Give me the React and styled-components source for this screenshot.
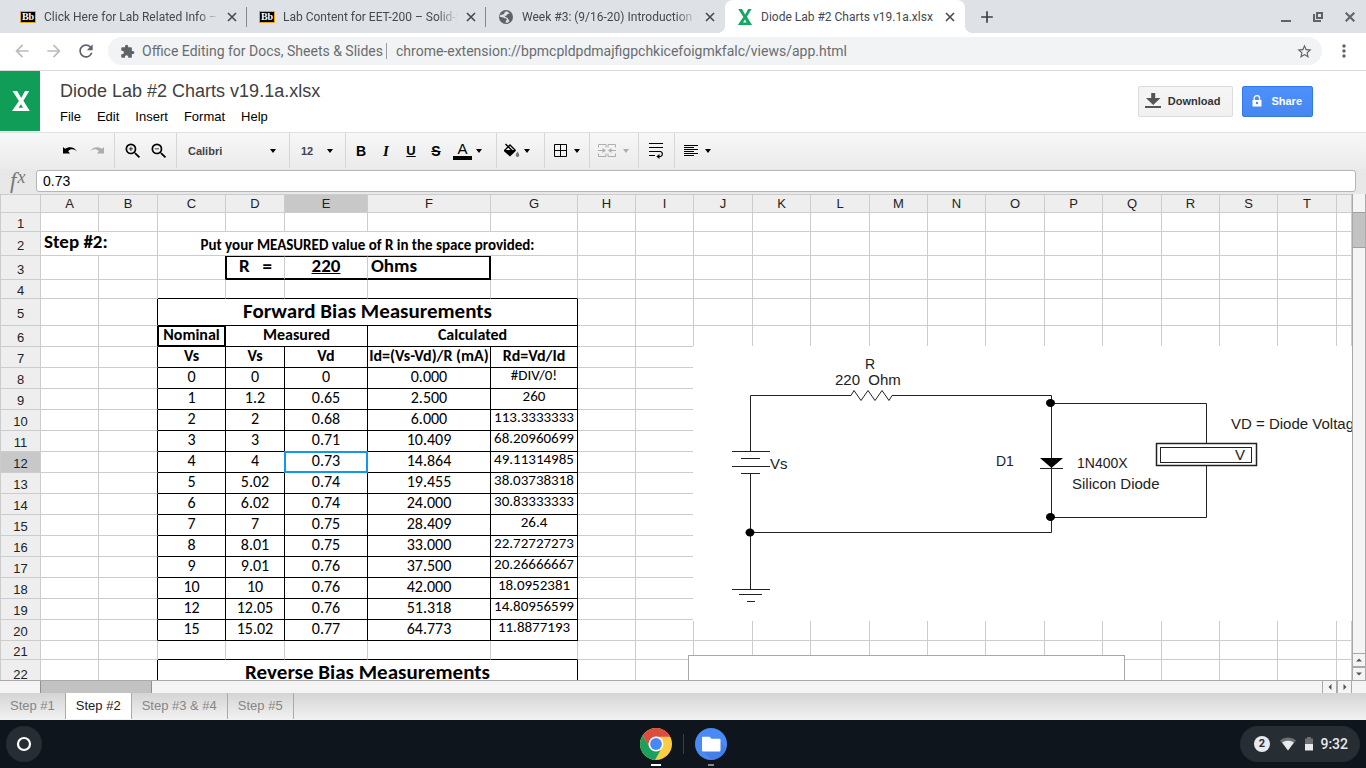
import React from "react";
import styled, { createGlobalStyle, css } from "styled-components";
import {
  MdArrowBack, MdArrowForward, MdRefresh, MdExtension, MdStarBorder, MdMoreVert,
  MdZoomIn, MdZoomOut, MdAdd,
} from "react-icons/md";

const SANS = `"Liberation Sans", Arial, sans-serif`;
const ROBOTO = `Roboto, "Liberation Sans", sans-serif`;
const SHEET = `Carlito, Lato, sans-serif`;

const GlobalStyle = createGlobalStyle`
  *, *::before, *::after { box-sizing: border-box; }
  body { margin: 0; background: #fff; font-family: ${SANS}; }
  button, input, select { font: inherit; color: inherit; }
  button { cursor: pointer; }
  svg { display: block; flex: none; }
`;

const Screen = styled.div`
  display: flex;
  flex-direction: column;
  height: 100vh;
  overflow: hidden;
`;

/* ---------- browser frame ---------- */

const TabStrip = styled.div`
  display: flex;
  align-items: stretch;
  flex: none;
  height: 33px;
  padding-left: 8px;
  background: #dee1e6;
  color: #45494d;
  font: 12px/16px ${ROBOTO};
`;

const Tab = styled.div`
  position: relative;
  display: flex;
  align-items: center;
  gap: 8px;
  flex: 0 1 240px;
  width: 240px;
  min-width: 0;
  max-width: 239px;
  padding: 0 10px 0 12px;
  ${(p) => p.$active ? css`
    max-width: 240px;
    background: #fff;
    border-radius: 8px 8px 0 0;
    &::before, &::after {
      content: "";
      position: absolute;
      bottom: 0;
      width: 8px;
      height: 8px;
    }
    &::before { left: -8px; background: radial-gradient(circle at 0 0, transparent 8px, #fff 8px); }
    &::after { right: -8px; background: radial-gradient(circle at 100% 0, transparent 8px, #fff 8px); }
  ` : css`
    background: ${p.$line ? "linear-gradient(#85888c, #85888c) right center / 1px 20px no-repeat" : "none"};
  `}
`;

const TabTitle = styled.span`
  flex: 1;
  min-width: 0;
  overflow: hidden;
  white-space: nowrap;
  ${(p) => p.$fade && "mask-image: linear-gradient(90deg, #000 88%, transparent);"}
`;

const GlyphButton = styled.button`
  display: flex;
  align-items: center;
  justify-content: center;
  flex: none;
  width: ${(p) => p.$w || 10}px;
  padding: 0;
  border: 0;
  background: none;
  color: ${(p) => p.$color || "#3c4043"};
`;

const WindowControls = styled.div`
  display: flex;
  align-items: center;
  gap: 22px;
  margin-left: auto;
  padding-right: 11px;
`;

const NavBar = styled.div`
  display: flex;
  align-items: center;
  flex: none;
  height: 38px;
  padding: 0 12px 1px;
  border-bottom: 1px solid #d9dadc;
  gap: 12px;
  font: 14px/18px ${ROBOTO};
`;

const Omnibox = styled.div`
  display: flex;
  align-items: center;
  flex: 1;
  min-width: 0;
  height: 28px;
  padding: 0 10px 0 12px;
  border-radius: 14px;
  background: #f1f3f4;
  color: #6a6d70;
  white-space: nowrap;
`;

const SiteName = styled.span`
  margin-left: 7px;
  padding-right: 3px;
  border-right: 1px solid #9a9da0;
  line-height: 16px;
`;

const Address = styled.input`
  flex: 1;
  min-width: 0;
  padding: 0 0 0 9px;
  border: 0;
  background: none;
`;

/* ---------- document header ---------- */

const DocHeader = styled.header`
  display: flex;
  flex: none;
  height: 62px;
  padding-right: 53px;
  border-bottom: 1px solid #e0e0e0;
`;

const DocLogo = styled.div`
  display: flex;
  align-items: center;
  justify-content: center;
  width: 40px;
  height: 60px;
  padding-left: 2px;
  background: #0f9d58;
`;

const DocInfo = styled.div`
  padding: 9px 0 0 20px;
  flex: 1;
`;

const DocTitle = styled.h1`
  margin: 0;
  color: #404040;
  font: 18px/22px ${SANS};
`;

const MenuBar = styled.nav`
  display: flex;
  gap: 16px;
  margin-top: 7px;
`;

const MenuButton = styled.button`
  padding: 0;
  border: 0;
  background: none;
  color: #000;
  font-size: 13px;
  line-height: 16px;
`;

const ActionButton = styled.button`
  display: flex;
  align-items: center;
  gap: ${(p) => (p.$primary ? 9 : 6)}px;
  height: 31px;
  margin: 15px 0 0 9px;
  padding: 0 ${(p) => (p.$primary ? 10 : 12)}px 2px ${(p) => (p.$primary ? 9 : 6)}px;
  border: 1px solid ${(p) => (p.$primary ? "#3079ed" : "#dcdcdc")};
  border-radius: 2px;
  background: ${(p) => (p.$primary ? "linear-gradient(#4d90fe, #4787ed)" : "linear-gradient(#f5f5f5, #f1f1f1)")};
  color: ${(p) => (p.$primary ? "#fff" : "#333")};
  font-size: 11px;
  line-height: 14px;
  font-weight: bold;
`;

/* ---------- editor toolbar ---------- */

const EditorBar = styled.div`
  display: flex;
  flex: none;
  height: 36px;
  background: linear-gradient(#f7f7f7, #ebebeb);
`;

const ToolGroup = styled.div`
  display: flex;
  align-items: center;
  gap: ${(p) => p.$gap || 0}px;
  padding: 0 ${(p) => p.$right || 0}px 0 ${(p) => p.$left || 0}px;
  height: 35px;
  border-right: 1px solid ${(p) => (p.$last ? "transparent" : "#d6d6d6")};
`;

const ToolButton = styled.button`
  display: flex;
  align-items: center;
  justify-content: center;
  gap: ${(p) => p.$gap || 0}px;
  min-width: ${(p) => p.$w || 16}px;
  height: 24px;
  padding: 0;
  border: 0;
  background: none;
  color: #000;
  opacity: ${(p) => (p.disabled ? 0.28 : 1)};
`;

const Letter = styled.span`
  font: ${(p) => p.$font || `bold 14px/16px ${SANS}`};
  text-decoration: ${(p) => p.$line || "none"};
`;

const TextColour = styled.span`
  width: 19px;
  border-bottom: 4px solid #000;
  font: 15px/15px ${SANS};
`;

const PickerBox = styled.span`
  display: flex;
  align-items: center;
  width: ${(p) => p.$w}px;
`;

const Picker = styled.select`
  appearance: none;
  flex: 1;
  min-width: 0;
  padding: 0;
  border: 0;
  background: none;
  color: #444;
  font-size: 11px;
  line-height: 14px;
  font-weight: bold;
`;

const FormulaBar = styled.label`
  display: flex;
  align-items: center;
  flex: none;
  height: 25px;
  padding: 0 10px 2px 0;
  background: #e8e8e8;
`;

const FxMark = styled.span`
  width: 36px;
  padding-left: 10px;
  color: #777;
  font: italic 23px/22px "Liberation Serif", serif;
  sup { margin-left: 1px; font-size: 18px; line-height: 8px; vertical-align: 5px; }
`;

const FormulaInput = styled.input`
  flex: 1;
  min-width: 0;
  height: 22px;
  padding: 0 6px;
  border: 1px solid #b5b5b5;
  border-radius: 3px;
  background: #fff;
  color: #000;
  font-size: 14px;
  line-height: 18px;
`;

/* ---------- spreadsheet ---------- */

const SheetArea = styled.div`
  display: flex;
  flex: 1;
  min-height: 0;
`;

const SheetView = styled.div`
  position: relative;
  flex: 1;
  min-width: 0;
  overflow: hidden;
  border-bottom: 1px solid #a9a9a9;
`;

const Sheet = styled.table`
  width: 100%;
  table-layout: fixed;
  border-spacing: 0;
  border-top: 1px solid #ccc;
  color: #000;
`;

const Heading = styled.th`
  padding: ${(p) => (p.$row ? "3px 0 0" : "0")};
  border-right: 1px solid #ccc;
  border-bottom: 1px solid #ccc;
  ${(p) => p.$row && "border-left: 1px solid #ccc;"}
  background: ${(p) => (p.$selected ? "#c8c8c8" : "#eee")};
  color: #222;
  font: 13px/15px ${SANS};
  text-align: center;
`;

const edge = (kind) =>
  kind === "thick" ? "2px solid #000" : kind === "black" ? "1px solid #000" : kind === "none" ? "0" : "1px solid #ccc";

const Cell = styled.td`
  position: relative;
  padding: 0 ${(p) => (p.$align === "left" ? 3 : 0)}px ${(p) => (p.$size > 16 ? 3 : 2)}px;
  overflow: hidden;
  border-right: ${(p) => edge(p.$right)};
  border-bottom: ${(p) => edge(p.$bottom)};
  border-left: ${(p) => edge(p.$left || "none")};
  border-top: ${(p) => edge(p.$top || "none")};
  font-family: ${SHEET};
  font-size: ${(p) => p.$size || 16}px;
  line-height: ${(p) => (p.$size > 16 ? 18 : p.$valign === "top" ? 14 : 16)}px;
  font-weight: ${(p) => (p.$bold ? 700 : 400)};
  text-decoration: ${(p) => (p.$underline ? "underline" : "none")};
  text-align: ${(p) => p.$align || "center"};
  vertical-align: ${(p) => p.$valign || "middle"};
  white-space: pre;
  ${(p) => p.$selected && css`
    overflow: visible;
    &::after {
      content: "";
      position: absolute;
      inset: -1px;
      border: 2px solid #1496f0;
    }
  `}
`;

const Picture = styled.div`
  position: absolute;
  left: 693px;
  top: 152px;
  right: 0;
  height: 275px;
  overflow: hidden;
  background: #fff;
`;

const ChartFrame = styled.div`
  position: absolute;
  left: 688px;
  top: 461px;
  width: 437px;
  height: 240px;
  border: 1px solid #a8a8a8;
  background: #fff;
`;

const VerticalBar = styled.div`
  display: flex;
  flex-direction: column;
  flex: none;
  width: 14px;
  padding-top: 18px;
  border-left: 1px solid #a9a9a9;
  border-right: 1px solid #a9a9a9;
  background: #f4f4f4;
`;

const VerticalThumb = styled.div`
  height: 36px;
  margin-bottom: auto;
  border: 1px solid #a0a0a0;
  border-width: 1px 0;
  background: #c2c2c2;
`;

const HorizontalBar = styled.div`
  display: flex;
  flex: none;
  height: 12px;
  padding: 0 14px 0 40px;
  background: #f4f4f4;
`;

const HorizontalThumb = styled.div`
  width: 112px;
  margin-right: auto;
  border: 1px solid #909090;
  border-width: 0 1px;
  background: #c2c2c2;
`;

const ScrollButton = styled.button`
  display: flex;
  align-items: center;
  justify-content: center;
  flex: none;
  width: ${(p) => (p.$vertical ? 12 : 15)}px;
  height: ${(p) => (p.$vertical ? 14 : 12)}px;
  padding: 0;
  border: 1px solid #a9a9a9;
  border-width: ${(p) => (p.$vertical ? "1px 0" : "0 1px")};
  background: #f4f4f4;
`;

const SheetTabs = styled.div`
  display: flex;
  flex: none;
  height: 27px;
  padding-bottom: 1px;
  background: linear-gradient(#d4d4d4, #f2f2f2);
`;

const SheetTab = styled.button`
  padding: 0 10px 1px;
  border: 0;
  border-right: 1px solid #aaa;
  background: ${(p) => (p.$active ? "#fff" : "none")};
  color: ${(p) => (p.$active ? "#222" : "#868686")};
  font-size: 13px;
  line-height: 16px;
`;

/* ---------- system shelf ---------- */

const Shelf = styled.footer`
  display: grid;
  grid-template-columns: 1fr auto 1fr;
  align-items: center;
  flex: none;
  height: 48px;
  padding: 0 6px;
  background: #0e151c;
`;

const Launcher = styled.button`
  display: flex;
  align-items: center;
  justify-content: center;
  width: 36px;
  height: 36px;
  padding: 0;
  border: 0;
  border-radius: 18px;
  background: #262d33;
`;

const Apps = styled.div`
  display: flex;
  align-items: center;
  gap: 11px;
  padding-left: 1px;
`;

const AppButton = styled.button`
  display: flex;
  flex-direction: column;
  align-items: center;
  gap: 4px;
  height: 48px;
  padding: 8px 0 0;
  border: 0;
  background: none;
  &::after {
    content: "";
    width: ${(p) => (p.$current ? 10 : 6)}px;
    height: 2px;
    background: ${(p) => (p.$current ? "#fff" : "#84888c")};
  }
`;

const AppDivider = styled.span`
  width: 1px;
  height: 20px;
  background: #3a4046;
`;

const Status = styled.button`
  display: flex;
  align-items: center;
  justify-self: end;
  width: 120px;
  height: 36px;
  padding: 0 12px 0 14px;
  border: 0;
  border-radius: 18px;
  background: #262d33;
  color: #e8eaed;
  font: 500 14px/18px ${ROBOTO};
`;

const Count = styled.span`
  width: 16px;
  margin-right: 10px;
  border-radius: 8px;
  background: #e8eaed;
  color: #262d33;
  font: bold 11px/16px ${ROBOTO};
  text-align: center;
`;

const Battery = styled.span`
  margin-left: 9px;
`;

const Clock = styled.span`
  margin-left: auto;
`;

/* ---------- drawings ---------- */

const Caret = () => (
  <svg width="6" height="4" viewBox="0 0 6 4"><path d="M0 0h6L3 4z" fill="#000" /></svg>
);

const BlackboardIcon = () => (
  <svg width="16" height="12" viewBox="0 0 16 12">
    <rect x="0.5" y="0.5" width="15" height="11" fill="#000" stroke="#e3a52b" />
    <text x="8" y="9" fontFamily="Liberation Serif" fontWeight="bold" fontSize="10" textAnchor="middle" fill="#fff">Bb</text>
  </svg>
);

const GlobeIcon = () => (
  <svg width="16" height="16" viewBox="0 0 16 16">
    <circle cx="8" cy="8" r="7" fill="#5f6368" />
    <path d="M9 2.2C7 2.5 6 3.5 6.200 5c-1.500 0-2 1-3.800.8L1.800 8c2 .3 3.200 0 4 .8.8 1 2.200.3 3 1.200.4.8-.6 1.300-1 2.200l-.2 1.600c1.400.2 3-.6 3.900-1.600L9.800 9.200 8 8.200 6.400 7l2.200-.4 1-1.600 2.200-.6z" fill="#dee1e6" />
  </svg>
);

const XMark = ({ color, w = 16, h = 18 }) => (
  <svg width={w} height={h} viewBox="0 0 18 20">
    <path d="M0.500 0H5.200L9.200 7 13 0h4.300L11.400 9.800 17.800 20H0L6.900 9.900zM9 13.200L6.500 16.800H11z" fill={color} fillRule="evenodd" />
  </svg>
);

const UndoIcon = ({ flip }) => (
  <svg width="16" height="10" viewBox="0 0 16 10">
    <path d={flip ? "M15 1l-2 1.800C9.500.2 3.500.3 1 5.500c3-2.800 6.500-2.900 8.800-.2L8 7.500h7z" : "M1 1l2 1.800C6.500.2 12.500.3 15 5.500c-3-2.800-6.500-2.900-8.800-.2L8 7.500H1z"} fill="#000" />
  </svg>
);

const FillIcon = () => (
  <svg width="17" height="16" viewBox="0 0 17 16">
    <path d="M2.500 1l7 7M1.500 7.500L7 2l5.500 5.500" fill="none" stroke="#000" strokeWidth="1.400" />
    <path d="M1 7h11.500v1.300L7 13.500 1 8.200z" fill="#000" />
    <path d="M14.500 8.500c1 1.700 1.800 2.600 1.800 3.700a1.800 1.800 0 0 1-3.600 0c0-1.100.8-2 1.800-3.700z" fill="#777" />
  </svg>
);

const BordersIcon = () => (
  <svg width="13" height="13" viewBox="0 0 13 13">
    <path d="M.5.5h12v12H.5zM6.500 0v13M0 6.500h13" fill="none" stroke="#000" />
  </svg>
);

const MergeIcon = () => (
  <svg width="18" height="13" viewBox="0 0 18 13">
    <path d="M8 3.500V.5H.5v3M.5 9.500v3H8v-3M10 3.500V.5h7.500v3M17.500 9.500v3H10v-3M0 6.500h7M18 6.500h-7" fill="none" stroke="#000" />
    <path d="M4.500 4L8 6.500 4.500 9zM13.500 4L10 6.500 13.500 9z" fill="#000" />
  </svg>
);

const WrapIcon = () => (
  <svg width="15" height="16" viewBox="0 0 15 16">
    <path d="M0 .5h14M0 4.500h14M0 8.500h11.500a2.600 2.600 0 0 1 0 5H9M0 12.500h6" fill="none" stroke="#000" strokeWidth="1.200" />
    <path d="M10.500 11v5L7.300 13.500z" fill="#000" />
  </svg>
);

const AlignIcon = () => (
  <svg width="14" height="11" viewBox="0 0 14 11">
    <path d="M0 .5h14M0 2.500h10M0 4.500h14M0 6.500h10M0 8.500h14M0 10.500h10" stroke="#000" />
  </svg>
);

const DownloadIcon = () => (
  <svg width="17" height="16" viewBox="0 0 17 16">
    <path d="M6.200 0h4v5h5.300L8.200 12 1 5h5.200zM0 13h16v2H0z" fill="#555" />
  </svg>
);

const LockIcon = () => (
  <svg width="10" height="12" viewBox="0 0 10 12">
    <path d="M2.200 5.500V3.300a2.700 2.700 0 0 1 5.400 0v2.200" fill="none" stroke="#fff" strokeWidth="1.300" />
    <rect x="0.500" y="5" width="9" height="6.500" fill="#fff" />
    <circle cx="5" cy="8" r="1.200" fill="#4787ed" />
  </svg>
);

const Arrow = ({ d }) => (
  <svg width="6" height="6" viewBox="0 0 6 6"><path d={d} fill="#555" /></svg>
);

const ChromeIcon = () => (
  <svg width="32" height="32" viewBox="0 0 32 32">
    <circle cx="16" cy="16" r="16" fill="#fccd43" />
    <path d="M2.700 7.200A16 16 0 0 0 15 32l7-12.500H9.600z" fill="#18a15f" />
    <path d="M2.700 7.300A16 16 0 0 1 30.300 8.700H16a7.500 7.500 0 0 0-6.500 11z" fill="#dc4c3f" />
    <circle cx="16" cy="16" r="7.500" fill="#fff" />
    <circle cx="16" cy="16" r="5.900" fill="#4688f4" />
  </svg>
);

const FilesIcon = () => (
  <svg width="32" height="32" viewBox="0 0 32 32">
    <circle cx="16" cy="16" r="16" fill="#4a8af4" />
    <path d="M8 23L16.500 31.500A16 16 0 0 0 31 21L25 12z" fill="#437fe6" />
    <path d="M8.500 8.800h6l2 2h7.800A1.200 1.200 0 0 1 25.500 12v10.300a1.200 1.200 0 0 1-1.200 1.200H8.200A1.200 1.200 0 0 1 7 22.300V10a1.200 1.200 0 0 1 1.500-1.200z" fill="#fff" />
  </svg>
);

const WifiIcon = () => (
  <svg width="16" height="14" viewBox="0 0 16 14">
    <path d="M0 3.500C4.500-.5 11.500-.5 16 3.500L8 13.500z" fill="#6b7075" />
    <path d="M2.200 5.500c3.300-2.200 8.300-2.200 11.600 0L8 13.500z" fill="#e8eaed" />
  </svg>
);

const BatteryIcon = () => (
  <svg width="8" height="14" viewBox="0 0 8 14">
    <path d="M2 0h4v1.500h2V7H0V1.500h2z" fill="#6b7075" />
    <path d="M0 7h8v6.500H0z" fill="#e8eaed" />
  </svg>
);

const Circuit = () => (
  <svg width="700" height="275" viewBox="693 346 700 275" role="img" aria-label="Diode test circuit">
    <g fill="none" stroke="#222" strokeWidth="1">
      <path d="M750.500 451V395.500H851l3-5 7 10 7-10 7 10 7-10 7 10 3-5h159.500v137H750.500" />
      <path d="M732 451.500h38M741 458.500h19M732 466.500h38M741 473.500h19M750.500 474v115M732 589.500h38M739 594.500h23M747 601.500h8" />
      <path d="M1051 403.500h155.500V443M1206.500 466v51.500H1051M1040 468.500h23" />
      <rect x="1156.500" y="443.500" width="100" height="22" strokeWidth="1.500" />
      <rect x="1160.500" y="447.500" width="91" height="15" />
    </g>
    <g fill="#000">
      <ellipse cx="750" cy="532.500" rx="4.500" ry="4" />
      <ellipse cx="1050.500" cy="403" rx="4.500" ry="4" />
      <ellipse cx="1050.500" cy="517" rx="4.500" ry="4" />
      <path d="M1040 458h23l-11.500 10z" />
    </g>
    <g fill="#222" fontFamily="Liberation Sans" fontSize="15">
      <text x="865" y="369" fontSize="14">R</text>
      <text x="835" y="385">{"220\u00a0 Ohm"}</text>
      <text x="770" y="469">Vs</text>
      <text x="996" y="466" fontSize="14">D1</text>
      <text x="1077" y="468" fontSize="14">1N400X</text>
      <text x="1072" y="489">Silicon Diode</text>
      <text x="1235" y="460">V</text>
      <text x="1231" y="429">VD = Diode Voltage</text>
    </g>
  </svg>
);

/* ---------- sheet data ---------- */

const COLUMNS = [
  ["A", 58], ["B", 59], ["C", 68], ["D", 59], ["E", 83], ["F", 123], ["G", 87], ["H", 58], ["I", 58],
  ["J", 59], ["K", 58], ["L", 59], ["M", 58], ["N", 58], ["O", 59], ["P", 58], ["Q", 59], ["R", 58], ["S", 58], ["T", 59],
];
const ROW_HEIGHTS = { 1: 19, 2: 24, 3: 24, 4: 19, 5: 27, 21: 19, 22: 27 };

const READINGS = [
  ["0", "0", "0", "0.000", "#DIV/0!"],
  ["1", "1.2", "0.65", "2.500", "260"],
  ["2", "2", "0.68", "6.000", "113.3333333"],
  ["3", "3", "0.71", "10.409", "68.20960699"],
  ["4", "4", "0.73", "14.864", "49.11314985"],
  ["5", "5.02", "0.74", "19.455", "38.03738318"],
  ["6", "6.02", "0.74", "24.000", "30.83333333"],
  ["7", "7", "0.75", "28.409", "26.4"],
  ["8", "8.01", "0.75", "33.000", "22.72727273"],
  ["9", "9.01", "0.76", "37.500", "20.26666667"],
  ["10", "10", "0.76", "42.000", "18.0952381"],
  ["12", "12.05", "0.76", "51.318", "14.80956599"],
  ["15", "15.02", "0.77", "64.773", "11.8877193"],
];

const CELLS = {
  A2: { text: "Step #2:", span: 2, size: 19, bold: true, align: "left" },
  C2: { text: "Put your MEASURED value of R in the space provided:", span: 5, size: 15, bold: true, valign: "bottom" },
  D3: { text: "R   =", size: 19, bold: true, top: "black", left: "black", bottom: "thick" },
  E3: { text: "220", size: 19, bold: true, underline: true, top: "black", bottom: "thick" },
  F3: { text: "Ohms", size: 19, bold: true, align: "left", top: "black", right: "thick", bottom: "thick", span: 1 },
  C5: { text: "Forward Bias Measurements", span: 5, size: 21, bold: true },
  C6: { text: "Nominal", bold: true, top: "black", left: "black", right: "thick", bottom: "thick" },
  D6: { text: "Measured", span: 2, bold: true },
  F6: { text: "Calculated", span: 2, bold: true },
  C7: { text: "Vs", bold: true },
  D7: { text: "Vs", bold: true },
  E7: { text: "Vd", bold: true },
  F7: { text: "Id=(Vs-Vd)/R (mA)", bold: true },
  G7: { text: "Rd=Vd/Id", bold: true },
  C22: { text: "Reverse Bias Measurements", span: 5, size: 21, bold: true },
};
READINGS.forEach((values, i) => {
  values.forEach((text, j) => {
    CELLS["CDEFG"[j] + (8 + i)] = j === 4 ? { text, size: 15, valign: "top" } : { text };
  });
});

const ruled = (row, col) => col >= 2 && col <= 6 && ((row >= 5 && row <= 20) || row === 22);
const boxed = (row, col) => row === 3 && col >= 3 && col <= 5;

function SheetRow({ row }) {
  const cells = [];
  for (let col = 0; col <= COLUMNS.length; col++) {
    const key = (COLUMNS[col] ? COLUMNS[col][0] : "U") + row;
    const cell = CELLS[key] || {};
    const span = cell.span || 1;
    const last = col + span - 1;
    const right = ruled(row, last) || ruled(row, last + 1) || (boxed(row, last + 1) && !boxed(row, last)) ? "black" : "grid";
    const bottom = ruled(row, col) || ruled(row + 1, col) || boxed(row + 1, col) ? "black" : "grid";
    cells.push(
      <Cell
        key={key}
        colSpan={span}
        $size={cell.size}
        $bold={cell.bold}
        $underline={cell.underline}
        $align={cell.align}
        $valign={cell.valign}
        $top={cell.top}
        $left={cell.left}
        $right={cell.right || right}
        $bottom={cell.bottom || bottom}
        $selected={key === "E12"}
      >
        {cell.text}
      </Cell>
    );
    col = last;
  }
  return (
    <tr style={{ height: ROW_HEIGHTS[row] || 21 }}>
      <Heading scope="row" $row $selected={row === 12}>{row}</Heading>
      {cells}
    </tr>
  );
}

const TABS = [
  { title: "Click Here for Lab Related Info – Solid", icon: <BlackboardIcon />, line: true, fade: true },
  { title: "Lab Content for EET-200 – Solid-State", icon: <BlackboardIcon />, line: true, fade: true },
  { title: "Week #3: (9/16-20) Introduction to", icon: <GlobeIcon />, fade: true },
  { title: "Diode Lab #2 Charts v19.1a.xlsx", icon: <XMark color="#16a765" w={16} h={16} />, active: true },
];

export default function App() {
  return (
    <Screen>
      <GlobalStyle />
      <TabStrip>
        {TABS.map((t) => (
          <Tab key={t.title} $active={t.active} $line={t.line}>
            {t.icon}
            <TabTitle $fade={t.fade}>{t.title}</TabTitle>
            <GlyphButton aria-label="Close tab">
              <svg width="10" height="10" viewBox="0 0 10 10"><path d="M1 1l8 8M9 1L1 9" stroke="#45494d" strokeWidth="1.600" /></svg>
            </GlyphButton>
          </Tab>
        ))}
        <GlyphButton $w={44} aria-label="New tab"><MdAdd size={20} /></GlyphButton>
        <WindowControls>
          <GlyphButton aria-label="Minimize">
            <svg width="10" height="10" viewBox="0 0 10 10"><path d="M0 8h10v2H0z" fill="#5f6368" /></svg>
          </GlyphButton>
          <GlyphButton aria-label="Restore">
            <svg width="10" height="10" viewBox="0 0 10 10"><path d="M4 1h5v5H4zM1 2v7h7" fill="none" stroke="#5f6368" strokeWidth="2" /></svg>
          </GlyphButton>
          <GlyphButton aria-label="Close window">
            <svg width="10" height="10" viewBox="0 0 10 10"><path d="M.7.7l8.600 8.600M9.300.7L.7 9.300" stroke="#5f6368" strokeWidth="2" /></svg>
          </GlyphButton>
        </WindowControls>
      </TabStrip>

      <NavBar>
        <GlyphButton $w={20} $color="#babcbe" aria-label="Back"><MdArrowBack size={20} /></GlyphButton>
        <GlyphButton $w={20} $color="#babcbe" aria-label="Forward"><MdArrowForward size={20} /></GlyphButton>
        <GlyphButton $w={20} $color="#5f6368" aria-label="Reload"><MdRefresh size={20} /></GlyphButton>
        <Omnibox>
          <MdExtension size={15} color="#5f6368" />
          <SiteName>Office Editing for Docs, Sheets &amp; Slides</SiteName>
          <Address aria-label="Address" defaultValue="chrome-extension://bpmcpldpdmajfigpchkicefoigmkfalc/views/app.html" />
          <GlyphButton $w={16} $color="#5f6368" aria-label="Bookmark"><MdStarBorder size={17} /></GlyphButton>
        </Omnibox>
        <GlyphButton $w={20} $color="#5f6368" aria-label="Browser menu"><MdMoreVert size={20} /></GlyphButton>
      </NavBar>

      <DocHeader>
        <DocLogo><XMark color="#fff" w={18} h={20} /></DocLogo>
        <DocInfo>
          <DocTitle>Diode Lab #2 Charts v19.1a.xlsx</DocTitle>
          <MenuBar>
            {["File", "Edit", "Insert", "Format", "Help"].map((m) => <MenuButton key={m}>{m}</MenuButton>)}
          </MenuBar>
        </DocInfo>
        <ActionButton><DownloadIcon />Download</ActionButton>
        <ActionButton $primary><LockIcon />Share</ActionButton>
      </DocHeader>

      <EditorBar>
        <ToolGroup $left={62} $right={9} $gap={11}>
          <ToolButton aria-label="Undo"><UndoIcon /></ToolButton>
          <ToolButton aria-label="Redo" disabled><UndoIcon flip /></ToolButton>
        </ToolGroup>
        <ToolGroup $left={8} $right={7} $gap={6}>
          <ToolButton $w={20} aria-label="Zoom in"><MdZoomIn size={20} /></ToolButton>
          <ToolButton $w={20} aria-label="Zoom out"><MdZoomOut size={20} /></ToolButton>
        </ToolGroup>
        <ToolGroup $left={11} $right={13}>
          <PickerBox $w={88}>
            <Picker aria-label="Font"><option>Calibri</option></Picker>
            <Caret />
          </PickerBox>
        </ToolGroup>
        <ToolGroup $left={11} $right={12}>
          <PickerBox $w={32}>
            <Picker aria-label="Font size"><option>12</option></Picker>
            <Caret />
          </PickerBox>
        </ToolGroup>
        <ToolGroup $left={7} $right={14} $gap={9}>
          <ToolButton aria-label="Bold"><Letter>B</Letter></ToolButton>
          <ToolButton aria-label="Italic"><Letter $font={`italic bold 15px/16px "Liberation Serif", serif`}>I</Letter></ToolButton>
          <ToolButton aria-label="Underline"><Letter $font={`bold 13px/16px ${SANS}`} $line="underline">U</Letter></ToolButton>
          <ToolButton aria-label="Strikethrough"><Letter $line="line-through">S</Letter></ToolButton>
          <ToolButton $gap={4} aria-label="Text colour"><TextColour>A</TextColour><Caret /></ToolButton>
        </ToolGroup>
        <ToolGroup $left={6} $right={14}>
          <ToolButton $gap={4} aria-label="Fill colour"><FillIcon /><Caret /></ToolButton>
        </ToolGroup>
        <ToolGroup $left={9} $right={9}>
          <ToolButton $gap={7} aria-label="Borders"><BordersIcon /><Caret /></ToolButton>
        </ToolGroup>
        <ToolGroup $left={8} $right={9}>
          <ToolButton $gap={7} disabled aria-label="Merge cells"><MergeIcon /><Caret /></ToolButton>
        </ToolGroup>
        <ToolGroup $left={9} $right={10}>
          <ToolButton aria-label="Wrap text"><WrapIcon /></ToolButton>
        </ToolGroup>
        <ToolGroup $left={9} $last>
          <ToolButton $gap={7} aria-label="Align"><AlignIcon /><Caret /></ToolButton>
        </ToolGroup>
      </EditorBar>
      <FormulaBar>
        <FxMark>f<sup>x</sup></FxMark>
        <FormulaInput defaultValue="0.73" />
      </FormulaBar>

      <SheetArea>
        <SheetView>
          <Sheet>
            <colgroup>
              <col style={{ width: 41 }} />
              {COLUMNS.map(([name, width]) => <col key={name} style={{ width }} />)}
              <col />
            </colgroup>
            <thead>
              <tr style={{ height: 18 }}>
                <Heading $row aria-label="Select all" />
                {COLUMNS.map(([name]) => <Heading key={name} scope="col" $selected={name === "E"}>{name}</Heading>)}
                <Heading aria-label="U" />
              </tr>
            </thead>
            <tbody>
              {Array.from({ length: 22 }, (_, i) => <SheetRow key={i} row={i + 1} />)}
            </tbody>
          </Sheet>
          <Picture><Circuit /></Picture>
          <ChartFrame />
        </SheetView>
        <VerticalBar>
          <VerticalThumb />
          <ScrollButton $vertical aria-label="Scroll up"><Arrow d="M0 4.500h6L3 1.500z" /></ScrollButton>
          <ScrollButton $vertical aria-label="Scroll down"><Arrow d="M0 1.500h6L3 4.500z" /></ScrollButton>
        </VerticalBar>
      </SheetArea>
      <HorizontalBar>
        <HorizontalThumb />
        <ScrollButton aria-label="Scroll left"><Arrow d="M4.500 0v6L1.500 3z" /></ScrollButton>
        <ScrollButton aria-label="Scroll right"><Arrow d="M1.500 0v6L4.500 3z" /></ScrollButton>
      </HorizontalBar>
      <SheetTabs>
        {["Step #1", "Step #2", "Step #3 & #4", "Step #5"].map((name) => (
          <SheetTab key={name} $active={name === "Step #2"}>{name}</SheetTab>
        ))}
      </SheetTabs>

      <Shelf>
        <Launcher aria-label="Launcher">
          <svg width="16" height="16" viewBox="0 0 16 16"><circle cx="8" cy="8" r="6" fill="none" stroke="#fff" strokeWidth="2.200" /></svg>
        </Launcher>
        <Apps>
          <AppButton $current aria-label="Chrome"><ChromeIcon /></AppButton>
          <AppDivider />
          <AppButton aria-label="Files"><FilesIcon /></AppButton>
        </Apps>
        <Status>
          <Count>2</Count>
          <WifiIcon />
          <Battery><BatteryIcon /></Battery>
          <Clock>9:32</Clock>
        </Status>
      </Shelf>
    </Screen>
  );
}
